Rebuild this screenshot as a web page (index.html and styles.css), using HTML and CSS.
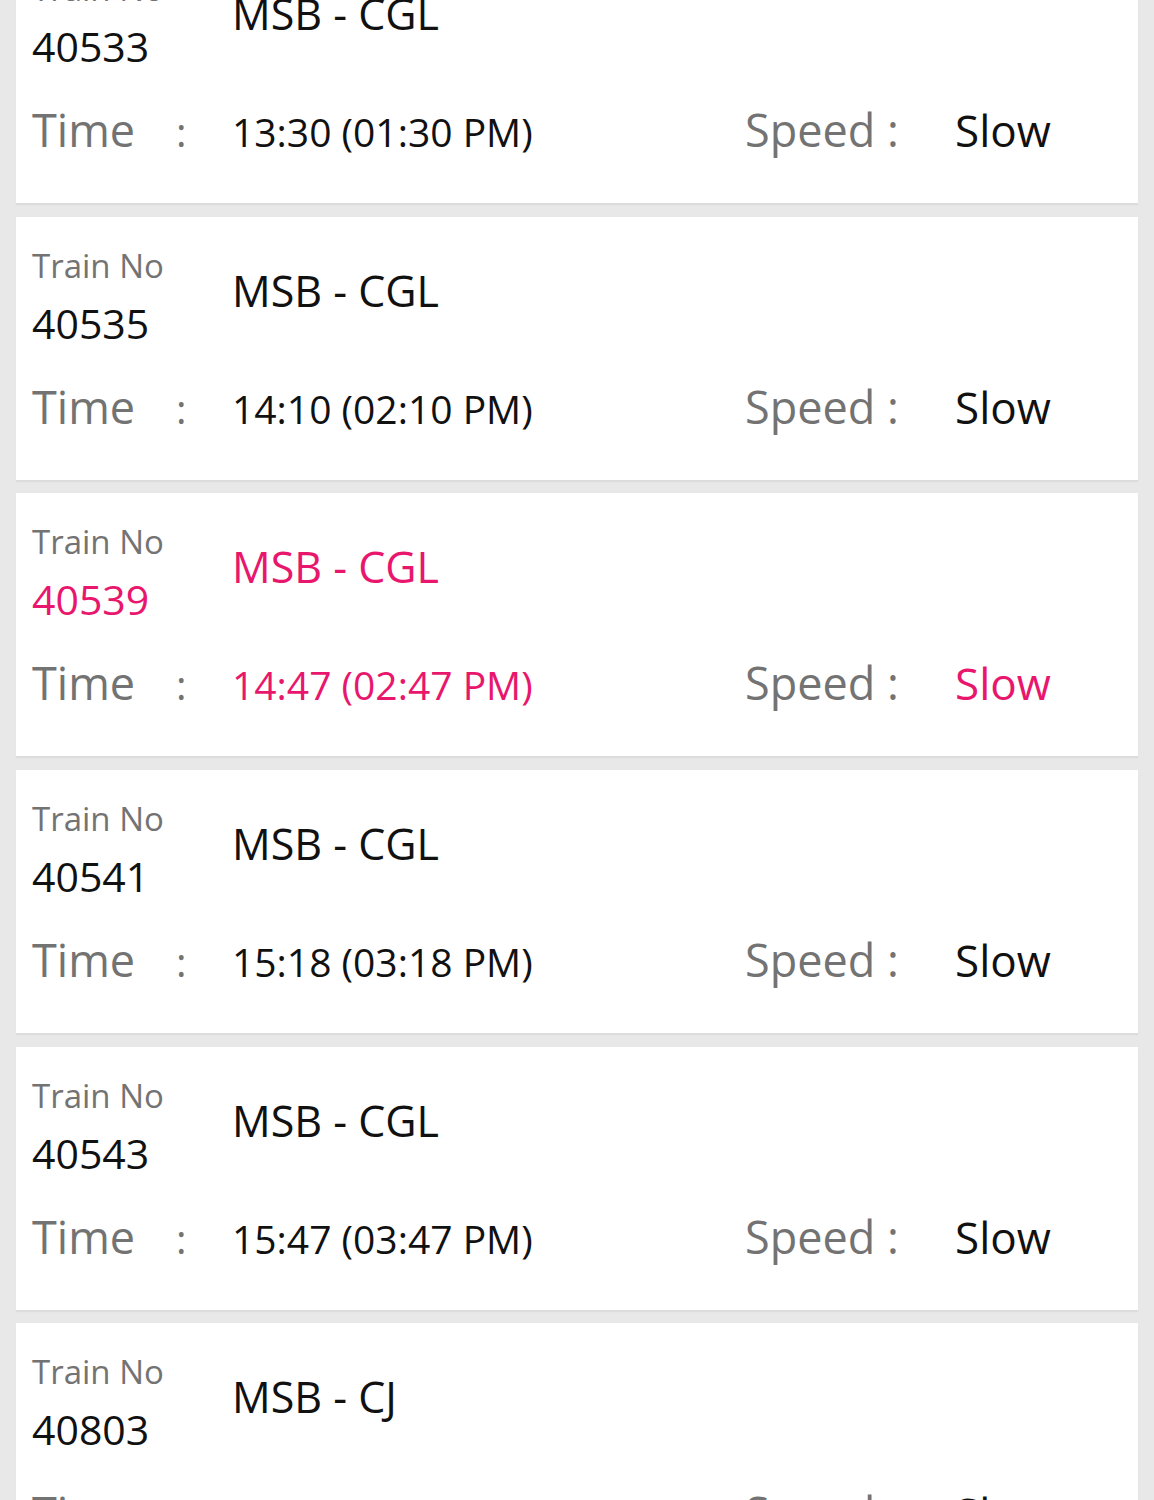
FILE: index.html
```html
<!DOCTYPE html>
<html lang="en">
<head>
<meta charset="utf-8">
<title>Trains</title>
<link rel="stylesheet" href="styles.css">
</head>
<body>
<div class="list">
  <div class="card">
    <div class="top">
      <div class="ident"><div class="label">Train No</div><div class="num">40533</div></div>
      <div class="route">MSB - CGL</div>
    </div>
    <div class="info">
      <div class="time"><span class="tlabel">Time</span><span class="colon">:</span><span class="val">13:30 (01:30 PM)</span></div>
      <div class="speed"><span class="slabel">Speed :</span><span class="sval">Slow</span></div>
    </div>
  </div>
  <div class="card">
    <div class="top">
      <div class="ident"><div class="label">Train No</div><div class="num">40535</div></div>
      <div class="route">MSB - CGL</div>
    </div>
    <div class="info">
      <div class="time"><span class="tlabel">Time</span><span class="colon">:</span><span class="val">14:10 (02:10 PM)</span></div>
      <div class="speed"><span class="slabel">Speed :</span><span class="sval">Slow</span></div>
    </div>
  </div>
  <div class="card active">
    <div class="top">
      <div class="ident"><div class="label">Train No</div><div class="num">40539</div></div>
      <div class="route">MSB - CGL</div>
    </div>
    <div class="info">
      <div class="time"><span class="tlabel">Time</span><span class="colon">:</span><span class="val">14:47 (02:47 PM)</span></div>
      <div class="speed"><span class="slabel">Speed :</span><span class="sval">Slow</span></div>
    </div>
  </div>
  <div class="card">
    <div class="top">
      <div class="ident"><div class="label">Train No</div><div class="num">40541</div></div>
      <div class="route">MSB - CGL</div>
    </div>
    <div class="info">
      <div class="time"><span class="tlabel">Time</span><span class="colon">:</span><span class="val">15:18 (03:18 PM)</span></div>
      <div class="speed"><span class="slabel">Speed :</span><span class="sval">Slow</span></div>
    </div>
  </div>
  <div class="card">
    <div class="top">
      <div class="ident"><div class="label">Train No</div><div class="num">40543</div></div>
      <div class="route">MSB - CGL</div>
    </div>
    <div class="info">
      <div class="time"><span class="tlabel">Time</span><span class="colon">:</span><span class="val">15:47 (03:47 PM)</span></div>
      <div class="speed"><span class="slabel">Speed :</span><span class="sval">Slow</span></div>
    </div>
  </div>
  <div class="card">
    <div class="top">
      <div class="ident"><div class="label">Train No</div><div class="num">40803</div></div>
      <div class="route">MSB - CJ</div>
    </div>
    <div class="info">
      <div class="time"><span class="tlabel">Time</span><span class="colon">:</span><span class="val">16:25 (04:25 PM)</span></div>
      <div class="speed"><span class="slabel">Speed :</span><span class="sval">Slow</span></div>
    </div>
  </div>
</div>
</body>
</html>
```

FILE: styles.css
```css
html, body {
  margin: 0;
  padding: 0;
  background: #e8e8e8;
  overflow: hidden;
}
body {
  font-family: "Open Sans", "Noto Sans", sans-serif;
  color: #111;
}
.list {
  display: flex;
  flex-direction: column;
  gap: 13.67px;
  padding: 0 16px;
  margin-top: -60px;
}
.card {
  background: #fff;
  height: 263px;
  box-sizing: border-box;
  padding: 23px 16px 0 16px;
  box-shadow: 0 2px 1px rgba(0, 0, 0, 0.05);
}
.top {
  display: flex;
  align-items: flex-start;
}
.ident {
  width: 200px;
  flex: none;
}
.label {
  font-size: 33px;
  line-height: 51px;
  color: #737373;
}
.num {
  font-size: 41px;
  line-height: 64px;
  color: #111;
}
.route {
  font-size: 43px;
  line-height: 60px;
  margin-top: 21px;
  color: #111;
}
.info {
  display: flex;
  align-items: baseline;
  margin-top: 22px;
  line-height: 60px;
}
.time {
  width: 713px;
  flex: none;
  display: flex;
  align-items: baseline;
}
.tlabel {
  width: 144px;
  font-size: 45px;
  color: #737373;
}
.colon {
  width: 56px;
  font-size: 40px;
  color: #737373;
}
.val {
  font-size: 39px;
  color: #111;
}
.speed {
  display: flex;
  align-items: baseline;
}
.slabel {
  width: 210px;
  font-size: 45px;
  color: #737373;
}
.sval {
  font-size: 44px;
  color: #111;
}
.active .num,
.active .route,
.active .val,
.active .sval {
  color: #e8176d;
}
```
